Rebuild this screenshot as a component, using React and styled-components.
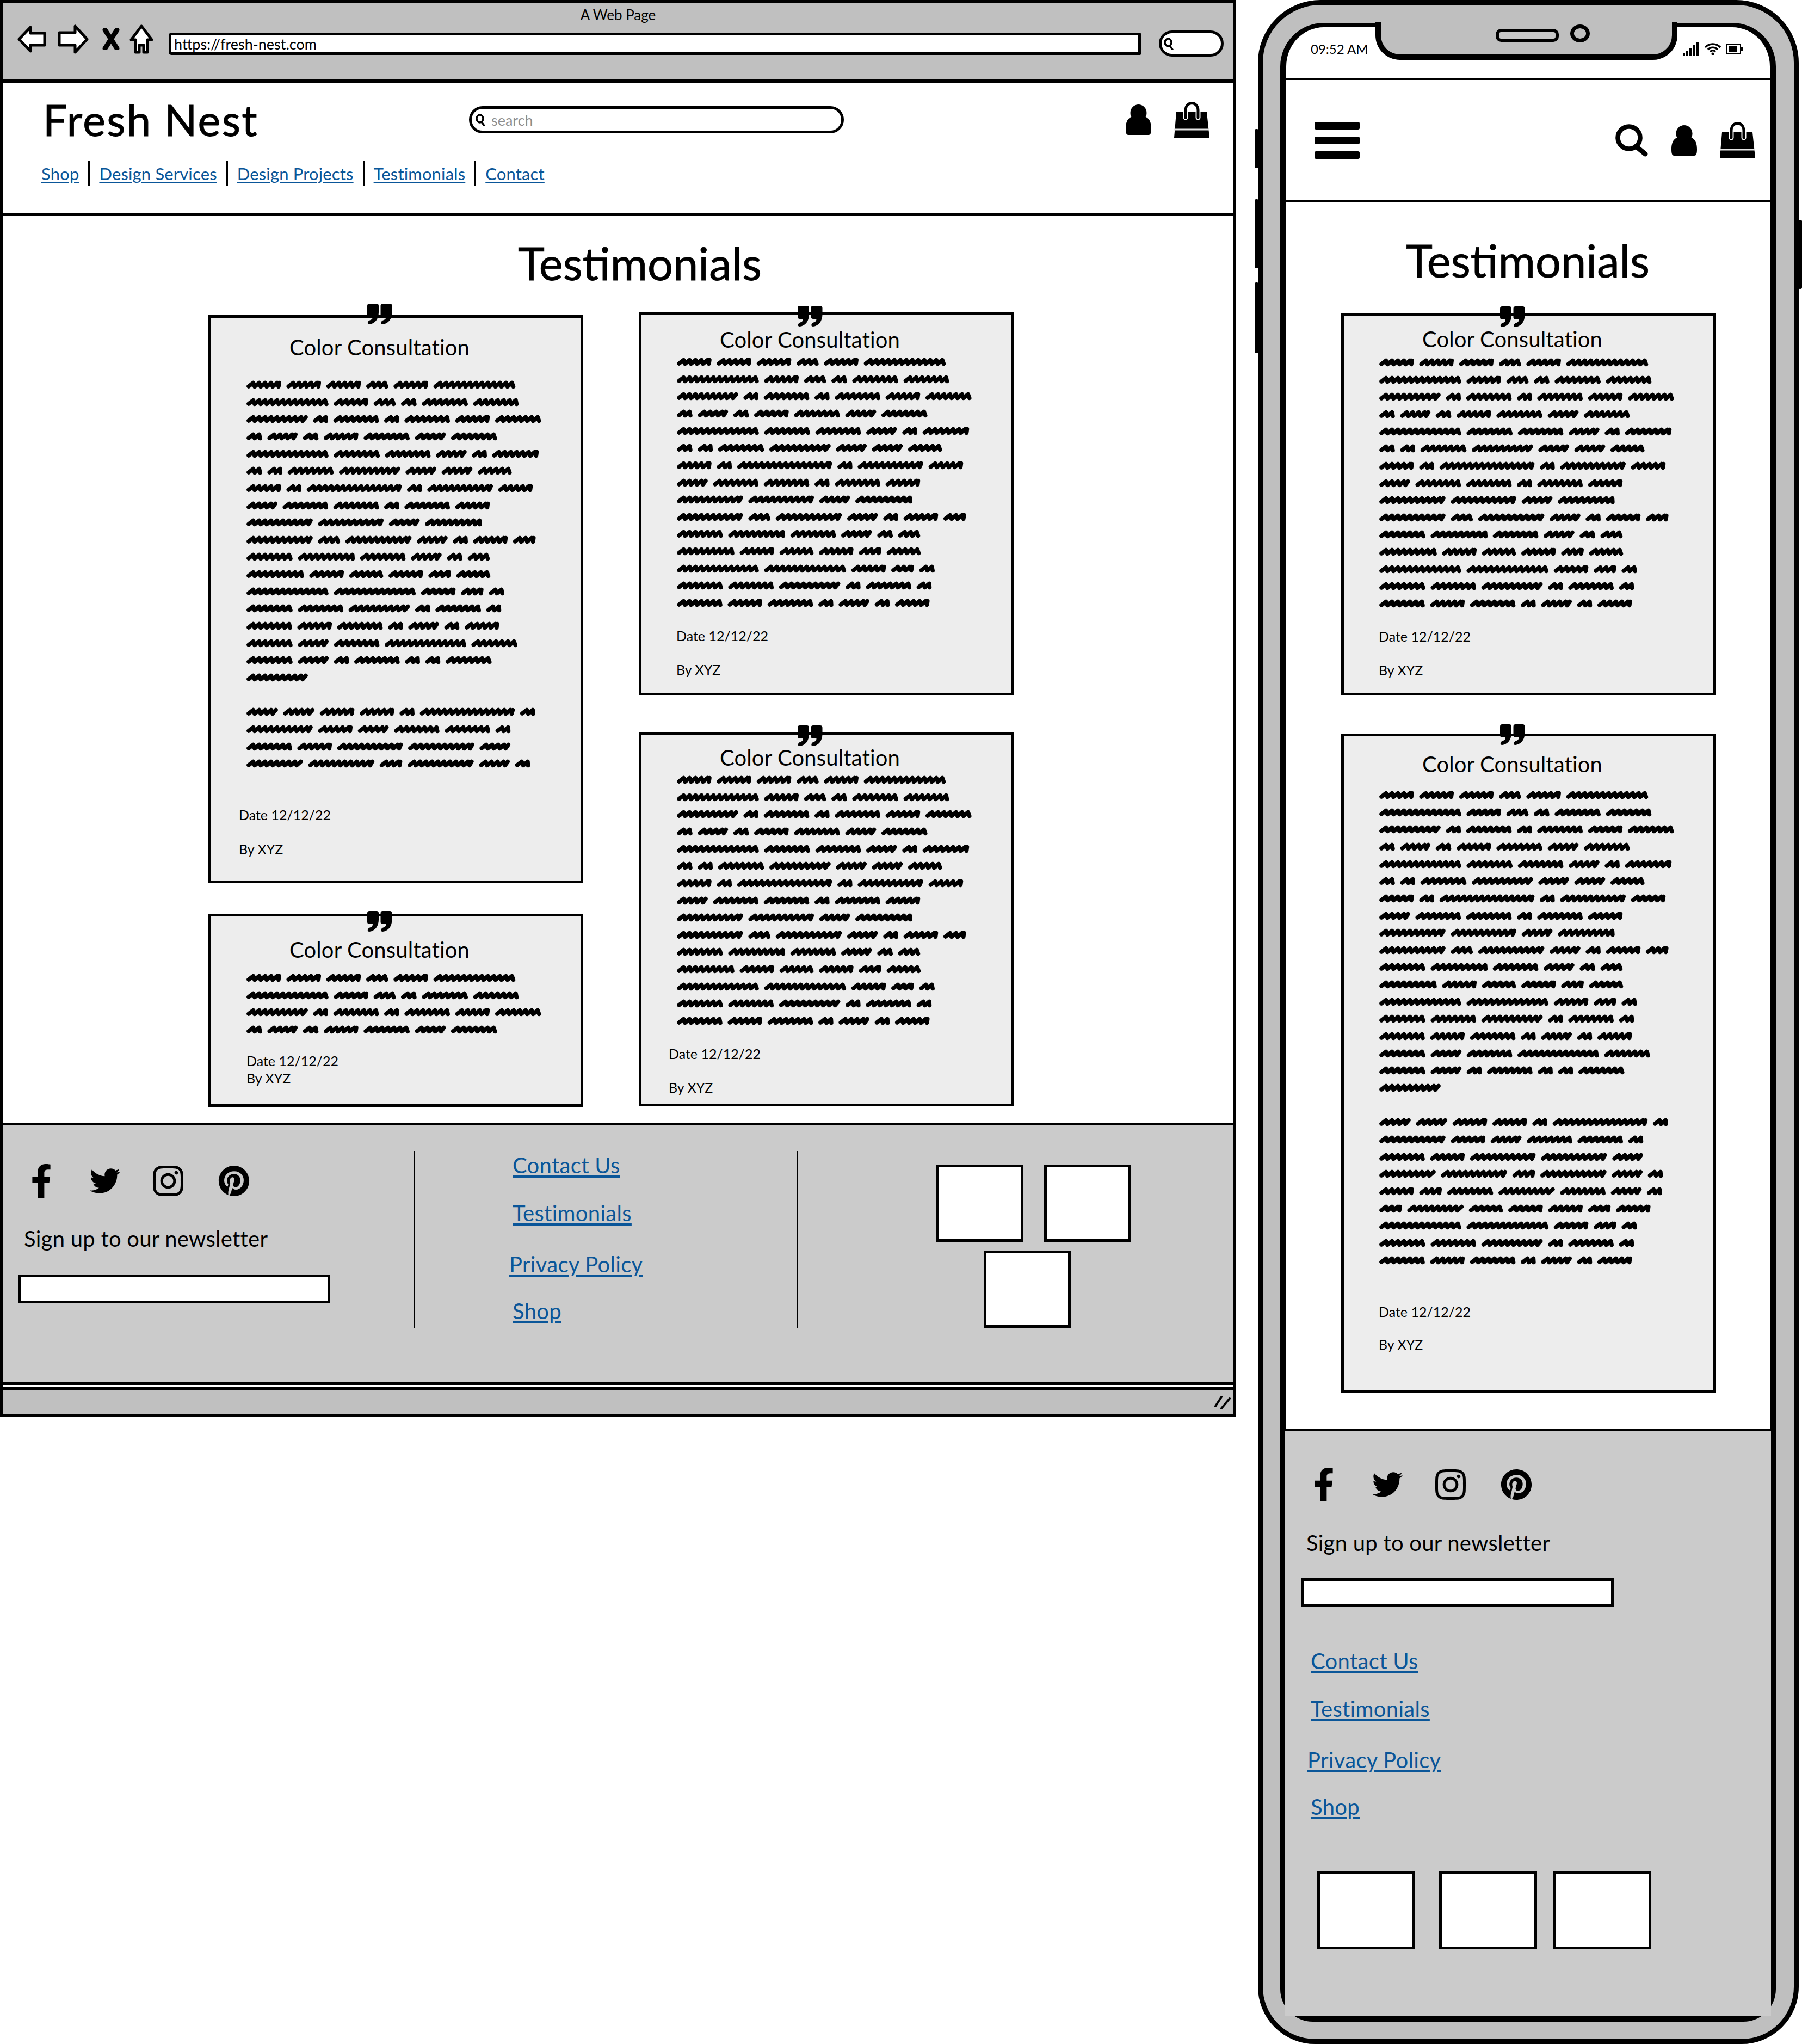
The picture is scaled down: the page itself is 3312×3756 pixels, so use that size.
import React from 'react';
import styled, { createGlobalStyle } from 'styled-components';
import { FaFacebookF, FaTwitter, FaInstagram, FaPinterest } from 'react-icons/fa';

const FONT = `Lato, "Open Sans", sans-serif`;
const LINK_BLUE = '#0a5699';
const CHROME = '#c0c0c0';
const FOOTER_BG = '#cbcbcb';

const GlobalStyle = createGlobalStyle`
  * { box-sizing: border-box; }
  html, body { margin: 0; background: #fff; }
  body { font-family: ${FONT}; color: #000; width: 3312px; height: 3756px; overflow: hidden; }
`;

/* word widths of the greeked text, line by line */
const L = [
  [64, 64, 64, 41, 64, 151],
  [151, 64, 41, 29, 85, 84],
  [113, 28, 84, 28, 84, 64, 85],
  [29, 56, 29, 64, 85, 57, 85],
  [151, 85, 84, 57, 28, 86],
  [29, 28, 85, 113, 57, 57, 63],
  [64, 28, 175, 28, 121, 64],
  [57, 84, 84, 28, 84, 64],
  [122, 121, 57, 105],
  [122, 41, 122, 57, 28, 64, 42],
  [85, 105, 84, 57, 29, 41],
  [106, 64, 63, 64, 42, 63],
  [151, 151, 64, 42, 29],
  [85, 84, 113, 28, 84, 28],
  [84, 64, 84, 28, 57, 28, 64],
  [85, 57, 84, 150, 85],
  [85, 57, 28, 84, 28, 28, 85],
  [113],
];
const P2 = [
  [58, 58, 64, 64, 28, 175, 28],
  [122, 64, 57, 84, 84, 28],
  [84, 64, 121, 122, 57],
  [104, 122, 42, 122, 57, 28],
  [64, 42, 85, 104, 84, 57, 28],
  [42, 104, 63, 64, 64, 42, 64],
  L[12],
  L[13],
  L[14],
];

const PITCH = 31.65;
const WORD_GAP = 9.3;

// cursive looking sawtooth for one greeked word
const wordPath = (x, y, w) => {
  let px = x + 4;
  const end = x + w - 4;
  let d = `M${px} ${y + 3}`;
  let i = 0;
  while (px < end) {
    const rise = i % 2 === 0;
    px = Math.min(px + (rise ? 8.5 : 2.5), end);
    d += `L${px.toFixed(1)} ${y + (rise ? -3.5 : 3.5)}`;
    i += 1;
  }
  return d;
};

const Scribble = ({ paragraphs, className }) => {
  let y = 16;
  let d = '';
  paragraphs.forEach((lines, p) => {
    if (p > 0) y += PITCH;
    lines.forEach((words) => {
      let x = 0;
      words.forEach((w) => {
        d += wordPath(x, Math.round(y), w);
        x += w + WORD_GAP;
      });
      y += PITCH;
    });
  });
  const height = Math.round(y - PITCH + 16);
  return (
    <svg className={className} width="550" height={height} viewBox={`0 0 550 ${height}`}>
      <path d={d} fill="none" stroke="#000" strokeWidth="7.5" strokeLinecap="round" strokeLinejoin="round" />
    </svg>
  );
};

const Page = styled.div`
  display: flex;
  align-items: flex-start;
  gap: 40px;
  width: 3312px;
`;

/* ---- browser window ---- */
const BrowserWindow = styled.div`
  width: 2272px;
  border: 5px solid #000;
`;

const TitleBar = styled.div`
  height: 147px;
  background: ${CHROME};
  border-bottom: 7px solid #000;
  padding-top: 4px;
`;

const PageTitle = styled.div`
  font-size: 26px;
  line-height: 36px;
  text-align: center;
`;

const Toolbar = styled.div`
  display: flex;
  align-items: center;
  height: 52px;
  margin-top: 9px;
  padding-left: 27px;
`;

const NavIcon = styled.svg`
  display: block;
  flex: none;
  margin-top: -16px;
  margin-right: ${(p) => p.$mr}px;
`;

const UrlBox = styled.div`
  width: 1787px;
  height: 41px;
  margin-right: 33px;
  background: #fff;
  border: 5px solid #000;
  border-radius: 5px 2px 2px 5px;
  font-size: 27px;
  line-height: 31px;
  padding-left: 5px;
`;

const SearchPill = styled.div`
  width: 119px;
  height: 48px;
  background: #fff;
  border: 5px solid #000;
  border-radius: 24px;
  display: flex;
  align-items: center;
  padding-left: 4px;
`;

const SiteHeader = styled.header`
  height: 245px;
  padding-top: 36px;
  border-bottom: 5px solid #000;
`;

const HeaderTop = styled.div`
  display: flex;
  align-items: center;
  height: 64px;
  padding: 0 44px 0 74px;
`;

const Logo = styled.div`
  width: 783px;
  font-size: 79px;
  line-height: 64px;
  -webkit-text-stroke: 1px #000;
  letter-spacing: 2.4px;
`;

const HeaderSearch = styled.div`
  width: 689px;
  height: 50px;
  border: 5px solid #000;
  border-radius: 25px;
  display: flex;
  align-items: center;
  gap: 11px;
  padding-left: 7px;
  color: #8e8e8e;
  font-size: 27px;
`;

const HeaderIcons = styled.div`
  display: flex;
  align-items: center;
  gap: 42px;
  margin-left: auto;
`;

const PlainIcon = styled.svg`
  display: block;
  flex: none;
`;

const Nav = styled.nav`
  display: flex;
  align-items: center;
  gap: 17px;
  margin-top: 44px;
  padding-left: 71px;
`;

const NavLink = styled.a`
  color: ${LINK_BLUE};
  font-size: 31px;
  letter-spacing: 0.15px;
  line-height: 46px;
  text-decoration: underline;
  text-decoration-thickness: 3px;
  text-underline-offset: 3px;
`;

const NavSep = styled.span`
  width: 3px;
  height: 46px;
  background: #000;
`;

const SiteMain = styled.main`
  padding: ${(p) => p.$top}px 0 ${(p) => p.$bottom}px ${(p) => p.$left}px;
`;

const Heading = styled.h1`
  margin: 0 0 ${(p) => p.$after}px ${(p) => p.$shift}px;
  font-size: 83px;
  font-weight: 400;
  line-height: 100px;
  text-align: center;
  -webkit-text-stroke: 0.8px #000;
`;

const CardGrid = styled.div`
  display: flex;
  align-items: flex-start;
  gap: 102px;
`;

const CardColumn = styled.div`
  display: flex;
  flex-direction: column;
  gap: ${(p) => p.$gap}px;
  padding-top: ${(p) => p.$top || 0}px;
`;

const Card = styled.article`
  position: relative;
  width: 689px;
  background: #ededed;
  border: 5px solid #000;
  padding-bottom: ${(p) => p.$bottom}px;
`;

const QuoteMark = styled.svg`
  position: absolute;
  left: 287px;
  top: ${(p) => p.$top}px;
`;

const CardTitle = styled.h2`
  width: 619px;
  margin: ${(p) => p.$top}px 0 0;
  font-size: 40px;
  font-weight: 400;
  letter-spacing: 0.15px;
  line-height: 40px;
  text-align: center;
`;

const CardText = styled(Scribble)`
  display: block;
  margin: ${(p) => p.$top}px 0 0 65px;
`;

const CardMeta = styled.div`
  display: flex;
  flex-direction: column;
  gap: ${(p) => p.$gap}px;
  margin: ${(p) => p.$top}px 0 0 ${(p) => p.$left}px;
  font-size: 25px;
  line-height: 32px;
`;

const FooterBar = styled.footer`
  display: flex;
  height: 482px;
  background: ${FOOTER_BG};
  border-top: 5px solid #000;
  border-bottom: 5px solid #000;
  padding-top: 47px;
`;

const NewsletterCol = styled.div`
  width: ${(p) => p.$width}px;
  padding-top: ${(p) => p.$top}px;
`;

const SocialRow = styled.div`
  display: flex;
  align-items: center;
  height: 60px;
  padding-left: ${(p) => p.$left}px;
`;

const SocialIcon = styled.span`
  display: flex;
  margin-left: ${(p) => p.$gap}px;
  font-size: ${(p) => p.$size}px;
`;

const SignupText = styled.div`
  margin: ${(p) => p.$top}px 0 0 39px;
  font-size: 40px;
  letter-spacing: 0.25px;
  line-height: 48px;
`;

const EmailInput = styled.div`
  width: 574px;
  height: 53px;
  margin: ${(p) => p.$top}px 0 0 ${(p) => p.$left}px;
  background: #fff;
  border: 5px solid #000;
`;

const Divider = styled.span`
  width: 3px;
  height: 326px;
  background: #000;
  flex: none;
`;

const LinkCol = styled.div`
  width: ${(p) => p.$width}px;
  padding-left: ${(p) => p.$left}px;
  padding-top: ${(p) => p.$top}px;
`;

const FooterLink = styled.a`
  display: table;
  color: ${LINK_BLUE};
  font-size: 40px;
  letter-spacing: 0.3px;
  line-height: 48px;
  text-decoration: underline;
  text-decoration-thickness: 4px;
  text-underline-offset: 4px;
  margin: ${(p) => p.$gap}px 0 0 ${(p) => p.$shift}px;
`;

const ThumbGrid = styled.div`
  display: flex;
  flex-wrap: wrap;
  justify-content: center;
  align-content: flex-start;
  gap: 16px 38px;
  width: 360px;
  margin: 25px 0 0 253px;
  & > :nth-child(3) { margin-right: 24px; }
`;

const Thumb = styled.div`
  width: ${(p) => p.$w}px;
  height: ${(p) => p.$h}px;
  background: #fff;
  border: 5px solid #000;
`;

const GapStrip = styled.div`
  height: 4px;
  background: #fff;
`;

const StatusBar = styled.div`
  display: flex;
  align-items: center;
  justify-content: flex-end;
  height: 50px;
  padding-right: 5px;
  background: ${CHROME};
  border-top: 5px solid #000;
`;

/* ---- phone ---- */
const Phone = styled.div`
  position: relative;
  width: 994px;
  height: 3756px;
  background: #bfbfbf;
  border: 9px solid #000;
  border-radius: 115px 115px 105px 105px;
  padding: 33px 33px 32px 32px;
`;

const SideButton = styled.span`
  position: absolute;
  top: ${(p) => p.$top}px;
  ${(p) => p.$side}: -15px;
  width: 7px;
  height: ${(p) => p.$h}px;
  background: #000;
  border-radius: 3px;
`;

const Screen = styled.div`
  position: relative;
  display: flex;
  flex-direction: column;
  height: 100%;
  border: 11px solid #000;
  border-top-width: 8px;
  border-radius: 80px 80px 60px 60px;
  background: #fff;
`;

const Notch = styled.div`
  position: absolute;
  top: -10px;
  left: 164px;
  width: 555px;
  height: 70px;
  background: #bfbfbf;
  border: 10px solid #000;
  border-top: 0;
  border-radius: 0 0 45px 45px;
  display: flex;
  justify-content: center;
  align-items: flex-start;
  gap: 21px;
  padding: 5px 0 0 59px;
`;

const Speaker = styled.span`
  width: 116px;
  height: 24px;
  margin-top: 8px;
  border: 6px solid #000;
  border-radius: 10px;
  background: #c8c8c8;
`;

const Camera = styled.span`
  width: 36px;
  height: 33px;
  border: 7px solid #000;
  border-radius: 50%;
`;

const PhoneStatus = styled.div`
  display: flex;
  align-items: center;
  justify-content: space-between;
  height: 97px;
  padding: 0 50px 14px 45px;
  border-bottom: 4px solid #000;
`;

const StatusTime = styled.span`
  font-size: 24px;
`;

const StatusIcons = styled.div`
  display: flex;
  align-items: center;
  gap: 10px;
`;

const MobileHeader = styled.header`
  display: flex;
  align-items: center;
  justify-content: space-between;
  height: 225px;
  padding: 0 27px 0 52px;
  border-bottom: 4px solid #000;
`;

const Hamburger = styled.div`
  display: flex;
  flex-direction: column;
  gap: 13px;
`;

const HamburgerBar = styled.span`
  display: block;
  width: 83px;
  height: 14px;
  background: #000;
  border-radius: 3px;
`;

const MobileFooter = styled.footer`
  flex: 1;
  margin: 0 -2px;
  background: ${FOOTER_BG};
  border-top: 5px solid #000;
`;

const ThumbRow = styled.div`
  display: flex;
  margin: 95px 0 0 59px;
`;

const RowThumb = styled(Thumb)`
  margin-right: ${(p) => p.$mr}px;
`;

const PAGE_LINKS = ['Shop', 'Design Services', 'Design Projects', 'Testimonials', 'Contact'];
const FOOTER_LINKS = [
  { label: 'Contact Us', gap: 0, shift: 0 },
  { label: 'Testimonials', gap: 40, shift: 0 },
  { label: 'Privacy Policy', gap: 46, shift: -6 },
  { label: 'Shop', gap: 38, shift: 0 },
];
const SOCIALS = [
  { Icon: FaFacebookF, size: 62, gap: 0 },
  { Icon: FaTwitter, size: 56, gap: 58 },
  { Icon: FaInstagram, size: 64, gap: 56 },
  { Icon: FaPinterest, size: 58, gap: 60 },
];

const UserIcon = () => (
  <PlainIcon width="47" height="56" viewBox="0 0 47 56">
    <path d="M0 44C0 32 4 24 13 22C17 28 30 28 34 22C43 24 47 32 47 44C47 52 46 56 42 56H5C1 56 0 52 0 44Z" />
    <ellipse cx="23.5" cy="15.5" rx="15" ry="15.5" />
  </PlainIcon>
);

const BagIcon = () => (
  <PlainIcon width="65" height="65" viewBox="0 0 65 65">
    <path d="M4 18H60L65 65H0Z" />
    <path d="M0 50H65" stroke="#e6e6e6" strokeWidth="3" />
    <path d="M21 28V15C21 -3 44 -3 44 15V28" fill="none" stroke="#fff" strokeWidth="9" strokeLinecap="round" />
    <path d="M21 28V15C21 -3 44 -3 44 15V28" fill="none" stroke="#000" strokeWidth="5" strokeLinecap="round" />
  </PlainIcon>
);

const SearchIcon = () => (
  <PlainIcon width="61" height="60" viewBox="0 0 61 60">
    <circle cx="25" cy="25" r="20.5" fill="none" stroke="#000" strokeWidth="8.5" />
    <path d="M38 41L55 55" fill="none" stroke="#000" strokeWidth="9" strokeLinecap="round" />
  </PlainIcon>
);

const TinySearch = () => (
  <PlainIcon width="18" height="24" viewBox="0 0 18 24">
    <ellipse cx="8" cy="10" rx="6" ry="7" fill="none" stroke="#000" strokeWidth="3.5" />
    <path d="M11 16L16 23" stroke="#000" strokeWidth="3.5" strokeLinecap="round" />
  </PlainIcon>
);

const QUOTE_D = 'M4 0H17Q21 0 21 4V16C21 28 14 37 4 38Q0 38 1 34Q2 31 6 30C9 29 10 27 10 24H4Q0 24 0 20V4Q0 0 4 0Z';

const TestimonialCard = ({ quoteTop, paragraphs, titleTop, textTop, metaTop, metaGap, metaLeft, bottom }) => (
  <Card $bottom={bottom}>
    <QuoteMark $top={quoteTop} width="46" height="39" viewBox="0 0 46 39">
      <path d={QUOTE_D} />
      <path transform="translate(24.5 0)" d={QUOTE_D} />
    </QuoteMark>
    <CardTitle $top={titleTop}>Color Consultation</CardTitle>
    <CardText paragraphs={paragraphs} $top={textTop} />
    <CardMeta $top={metaTop} $gap={metaGap} $left={metaLeft}>
      <span>Date 12/12/22</span>
      <span>By XYZ</span>
    </CardMeta>
  </Card>
);

const Social = () => (
  <SocialRow $left={40}>
    {SOCIALS.map(({ Icon, size, gap }, i) => (
      <SocialIcon key={i} $gap={gap} $size={size}>
        <Icon />
      </SocialIcon>
    ))}
  </SocialRow>
);

const FooterLinks = () =>
  FOOTER_LINKS.map((l) => (
    <FooterLink key={l.label} $gap={l.gap} $shift={l.shift}>
      {l.label}
    </FooterLink>
  ));

const BrowserFrame = () => (
  <BrowserWindow>
    <TitleBar>
      <PageTitle>A Web Page</PageTitle>
      <Toolbar>
        <NavIcon $mr={21} width="53" height="50" viewBox="0 0 53 50">
          <path d="M3 25L24 3V14H50V36H24V47Z" fill="#fff" stroke="#000" strokeWidth="5" strokeLinejoin="round" />
        </NavIcon>
        <NavIcon $mr={25} width="57" height="54" viewBox="0 0 57 54">
          <path d="M54 27L32 3V15H3V38H32V51Z" fill="#fff" stroke="#000" strokeWidth="5" strokeLinejoin="round" />
        </NavIcon>
        <NavIcon $mr={18} width="32" height="40" viewBox="0 0 32 40">
          <path d="M5 3L27 37M27 3L5 37" fill="none" stroke="#000" strokeWidth="9" strokeLinecap="round" />
        </NavIcon>
        <NavIcon $mr={28} width="44" height="54" viewBox="0 0 44 54">
          <path d="M22 3L41 28H33V51H26V38H18V51H11V28H3Z" fill="#fff" stroke="#000" strokeWidth="5" strokeLinejoin="round" />
        </NavIcon>
        <UrlBox>https://fresh-nest.com</UrlBox>
        <SearchPill>
          <TinySearch />
        </SearchPill>
      </Toolbar>
    </TitleBar>

    <SiteHeader>
      <HeaderTop>
        <Logo>Fresh Nest</Logo>
        <HeaderSearch>
          <TinySearch />
          search
        </HeaderSearch>
        <HeaderIcons>
          <UserIcon />
          <BagIcon />
        </HeaderIcons>
      </HeaderTop>
      <Nav>
        {PAGE_LINKS.map((name, i) => (
          <React.Fragment key={name}>
            {i > 0 && <NavSep />}
            <NavLink>{name}</NavLink>
          </React.Fragment>
        ))}
      </Nav>
    </SiteHeader>

    <SiteMain $top={36} $bottom={29} $left={378}>
      <Heading $after={41} $shift={-298}>Testimonials</Heading>
      <CardGrid>
        <CardColumn $gap={56} $top={5}>
          <TestimonialCard quoteTop={-26} paragraphs={[L, P2.slice(0, 4)]} titleTop={34} textTop={33} metaTop={62} metaGap={31} metaLeft={51} bottom={42} />
          <TestimonialCard quoteTop={-10} paragraphs={[L.slice(0, 4)]} titleTop={41} textTop={16} metaTop={25} metaGap={0} metaLeft={65} bottom={32} />
        </CardColumn>
        <CardColumn $gap={67}>
          <TestimonialCard quoteTop={-17} paragraphs={[L.slice(0, 15)]} titleTop={25} textTop={5} metaTop={28} metaGap={30} metaLeft={64} bottom={27} />
          <TestimonialCard quoteTop={-17} paragraphs={[L.slice(0, 15)]} titleTop={22} textTop={5} metaTop={28} metaGap={30} metaLeft={50} bottom={14} />
        </CardColumn>
      </CardGrid>
    </SiteMain>

    <FooterBar>
      <NewsletterCol $width={755} $top={25}>
        <Social />
        <SignupText $top={52}>Sign up to our newsletter</SignupText>
        <EmailInput $top={42} $left={28} />
      </NewsletterCol>
      <Divider />
      <LinkCol $width={701} $left={179} $top={2}>
        <FooterLinks />
      </LinkCol>
      <Divider />
      <ThumbGrid>
        <Thumb $w={160} $h={142} />
        <Thumb $w={160} $h={142} />
        <Thumb $w={160} $h={142} />
      </ThumbGrid>
    </FooterBar>
    <GapStrip />
    <StatusBar>
      <PlainIcon width="30" height="26" viewBox="0 0 30 26">
        <path d="M2 20L13 3M13 24L28 6" fill="none" stroke="#000" strokeWidth="4" strokeLinecap="round" />
      </PlainIcon>
    </StatusBar>
  </BrowserWindow>
);

const PhoneFrame = () => (
  <Phone>
    <SideButton $side="left" $top={228} $h={72} />
    <SideButton $side="left" $top={357} $h={127} />
    <SideButton $side="left" $top={510} $h={130} />
    <SideButton $side="right" $top={395} $h={127} />
    <Screen>
      <Notch>
        <Speaker />
        <Camera />
      </Notch>
      <PhoneStatus>
        <StatusTime>09:52 AM</StatusTime>
        <StatusIcons>
          <PlainIcon width="30" height="26" viewBox="0 0 30 26">
            <path d="M0 21h4v5H0zM6 16h4v10H6zM12 11h4v15h-4zM18 6h4v20h-4zM25 0h4v26h-4z" />
          </PlainIcon>
          <PlainIcon width="30" height="22" viewBox="0 0 30 22">
            <path d="M1 8C9 0 21 0 29 8M6 12C11 7 19 7 24 12M10 16C13 13 17 13 20 16" fill="none" stroke="#000" strokeWidth="3.5" />
            <circle cx="15" cy="20" r="2.5" />
          </PlainIcon>
          <PlainIcon width="30" height="18" viewBox="0 0 30 18">
            <rect x="1" y="1" width="25" height="16" fill="none" stroke="#000" strokeWidth="2" />
            <rect x="5" y="4" width="14" height="10" />
            <rect x="27" y="6" width="3" height="6" />
          </PlainIcon>
        </StatusIcons>
      </PhoneStatus>
      <MobileHeader>
        <Hamburger>
          <HamburgerBar />
          <HamburgerBar />
          <HamburgerBar />
        </Hamburger>
        <HeaderIcons>
          <SearchIcon />
          <UserIcon />
          <BagIcon />
        </HeaderIcons>
      </MobileHeader>
      <SiteMain $top={56} $bottom={66} $left={101}>
        <Heading $after={47} $shift={-102}>Testimonials</Heading>
        <CardColumn $gap={70}>
          <TestimonialCard quoteTop={-17} paragraphs={[L.slice(0, 15)]} titleTop={23} textTop={7} metaTop={28} metaGap={30} metaLeft={64} bottom={26} />
          <TestimonialCard quoteTop={-22} paragraphs={[L, P2]} titleTop={31} textTop={21} metaTop={62} metaGap={28} metaLeft={64} bottom={68} />
        </CardColumn>
      </SiteMain>
      <MobileFooter>
        <NewsletterCol $width={880} $top={68}>
          <Social />
          <SignupText $top={53}>Sign up to our newsletter</SignupText>
          <EmailInput $top={41} $left={30} />
        </NewsletterCol>
        <LinkCol $left={47} $top={75}>
          <FooterLinks />
        </LinkCol>
        <ThumbRow>
          <RowThumb $w={180} $h={143} $mr={44} />
          <RowThumb $w={180} $h={143} $mr={30} />
          <RowThumb $w={180} $h={143} $mr={0} />
        </ThumbRow>
      </MobileFooter>
    </Screen>
  </Phone>
);

export default function App() {
  return (
    <>
      <GlobalStyle />
      <Page>
        <BrowserFrame />
        <PhoneFrame />
      </Page>
    </>
  );
}
